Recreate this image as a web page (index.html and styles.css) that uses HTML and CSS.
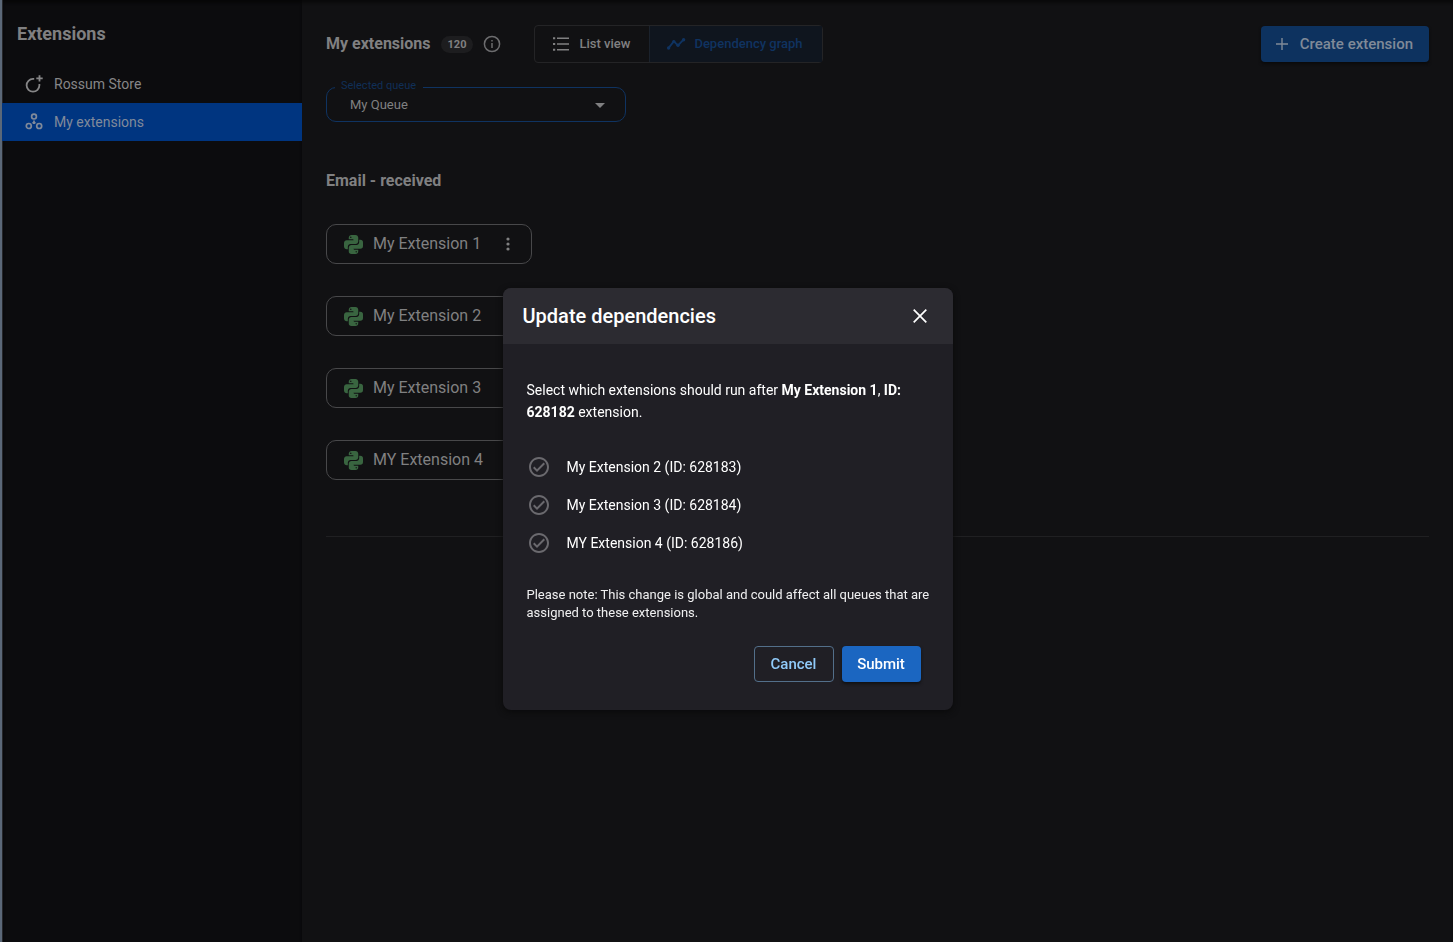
FILE: index.html
```html
<!DOCTYPE html>
<html lang="en">
<head>
<meta charset="utf-8">
<meta name="viewport" content="width=device-width, initial-scale=1">
<title>My extensions</title>
<link rel="stylesheet" href="styles.css">
</head>
<body>
<svg class="defs" aria-hidden="true">
  <symbol id="python" viewBox="2 2.5 20 20"><path d="M19.14,7.5A2.86,2.86 0 0,1 22,10.36V14.14A2.86,2.86 0 0,1 19.14,17H12C12,17.39 12.32,17.96 12.71,17.96H17V19.64A2.86,2.86 0 0,1 14.14,22.5H9.86A2.86,2.86 0 0,1 7,19.64V15.89C7,14.31 8.28,13.04 9.86,13.04H15.11C16.69,13.04 17.96,11.76 17.96,10.18V7.5H19.14M14.86,19.29C14.46,19.29 14.14,19.59 14.14,20.18C14.14,20.77 14.46,20.89 14.86,20.89A0.71,0.71 0 0,0 15.57,20.18C15.57,19.59 15.25,19.29 14.86,19.29M4.86,17.5C3.28,17.5 2,16.22 2,14.64V10.86C2,9.28 3.28,8 4.86,8H12C12,7.61 11.68,7.04 11.29,7.04H7V5.36C7,3.78 8.28,2.5 9.86,2.5H14.14C15.72,2.5 17,3.78 17,5.36V9.11C17,10.69 15.72,11.96 14.14,11.96H8.89C7.31,11.96 6.04,13.24 6.04,14.82V17.5H4.86M9.14,5.71C9.54,5.71 9.86,5.41 9.86,4.82C9.86,4.23 9.54,4.11 9.14,4.11C8.75,4.11 8.43,4.23 8.43,4.82C8.43,5.41 8.75,5.71 9.14,5.71Z"/></symbol>
  <symbol id="dots" viewBox="0 0 20 20"><circle cx="10" cy="5" r="1.6"/><circle cx="10" cy="10" r="1.6"/><circle cx="10" cy="15" r="1.6"/></symbol>
  <symbol id="check" viewBox="0 0 24 24"><path d="M12 2C6.48 2 2 6.48 2 12s4.48 10 10 10 10-4.48 10-10S17.52 2 12 2zm0 18c-4.41 0-8-3.59-8-8s3.59-8 8-8 8 3.59 8 8-3.59 8-8 8zm4.59-12.42L10 14.17l-2.59-2.58L6 13l4 4 8-8z"/></symbol>
</svg>
<div class="app">
  <aside class="sidebar">
    <h2 class="sidebar-title">Extensions</h2>
    <nav class="nav">
      <a class="nav-item" href="#store">
        <svg class="icon-nav" viewBox="0 0 20 20" fill="none" stroke="currentColor" stroke-width="1.8"><path d="M10.2 4.9H9A6.4 6.4 0 1 0 15.4 11.3V10"/><path d="M15.5 1.2v6.4M12.3 4.4h6.4"/></svg>
        Rossum Store
      </a>
      <a class="nav-item active" href="#mine" aria-current="page">
        <svg class="icon-nav" viewBox="0 0 20 20" fill="none" stroke="currentColor" stroke-width="1.7"><circle cx="10" cy="4.6" r="2.4"/><circle cx="4.8" cy="14" r="2.5"/><circle cx="15.2" cy="14" r="2.5"/><path d="M10 8.6v2M10 10l-1.4 1.4M10 10l1.4 1.4"/></svg>
        My extensions
      </a>
    </nav>
  </aside>
  <main class="main">
    <header class="toolbar">
      <h1 class="heading">My extensions</h1>
      <span class="count">120</span>
      <svg class="icon-info" viewBox="0 0 18 18" fill="none" stroke="currentColor" stroke-width="1.5"><circle cx="9" cy="9" r="7.6"/><path d="M9 8v5M9 5v1.6"/></svg>
      <div class="toggle">
        <button class="toggle-btn" type="button">
          <svg class="icon-toggle" viewBox="0 0 20 20" fill="currentColor"><path d="M2 3.2h2.2v2H2zM2 9h2.2v2H2zM2 14.8h2.2v2H2zM6 3.4h12v1.6H6zM6 9.2h12v1.6H6zM6 15h12v1.6H6z"/></svg>
          List view
        </button>
        <button class="toggle-btn selected" type="button" aria-pressed="true">
          <svg class="icon-toggle" viewBox="0 0 20 20" fill="currentColor"><path d="M2.3 14.4 7.8 7.4l4.2 4 5.8-6" fill="none" stroke="currentColor" stroke-width="1.8"/><circle cx="2.6" cy="14" r="1.7"/><circle cx="7.8" cy="7.6" r="1.7"/><circle cx="12" cy="11.2" r="1.7"/><circle cx="17.6" cy="5.8" r="1.7"/></svg>
          Dependency graph
        </button>
      </div>
      <button class="create" type="button">
        <svg class="icon-plus" viewBox="0 0 12 12" fill="none" stroke="currentColor" stroke-width="1.4"><path d="M6 0v12M0 6h12"/></svg>
        Create extension
      </button>
    </header>
    <div class="queue">
      <label class="queue-label" for="queue">Selected queue</label>
      <select class="queue-select" id="queue"><option>My Queue</option></select>
      <svg class="queue-arrow" viewBox="0 0 10 5" fill="currentColor"><path d="M0 0h10L5 5z"/></svg>
    </div>
    <section class="group">
      <h2 class="group-title">Email - received</h2>
      <div class="cards">
        <div class="card"><svg class="icon-python"><use href="#python"/></svg><span class="card-name">My Extension 1</span><button class="more" type="button" aria-label="More"><svg class="icon-more"><use href="#dots"/></svg></button></div>
        <div class="card"><svg class="icon-python"><use href="#python"/></svg><span class="card-name">My Extension 2</span><button class="more" type="button" aria-label="More"><svg class="icon-more"><use href="#dots"/></svg></button></div>
        <div class="card"><svg class="icon-python"><use href="#python"/></svg><span class="card-name">My Extension 3</span><button class="more" type="button" aria-label="More"><svg class="icon-more"><use href="#dots"/></svg></button></div>
        <div class="card"><svg class="icon-python"><use href="#python"/></svg><span class="card-name">MY Extension 4</span><button class="more" type="button" aria-label="More"><svg class="icon-more"><use href="#dots"/></svg></button></div>
      </div>
    </section>
  </main>
</div>
<div class="overlay">
  <div class="dialog" role="dialog" aria-modal="true" aria-labelledby="dialog-title">
    <header class="dialog-head">
      <h2 class="dialog-title" id="dialog-title">Update dependencies</h2>
      <button class="close" type="button" aria-label="Close"><svg class="icon-close" viewBox="0 0 14 14" fill="none" stroke="currentColor" stroke-width="1.7"><path d="M.7.7l12.6 12.6M13.3.7L.7 13.3"/></svg></button>
    </header>
    <div class="dialog-body">
      <p class="intro">Select which extensions should run after <strong>My Extension 1</strong>, <strong>ID: 628182</strong> extension.</p>
      <div class="options">
        <label class="option"><input class="option-input" type="checkbox"><svg class="icon-check"><use href="#check"/></svg>My Extension 2 (ID: 628183)</label>
        <label class="option"><input class="option-input" type="checkbox"><svg class="icon-check"><use href="#check"/></svg>My Extension 3 (ID: 628184)</label>
        <label class="option"><input class="option-input" type="checkbox"><svg class="icon-check"><use href="#check"/></svg>MY Extension 4 (ID: 628186)</label>
      </div>
      <p class="note">Please note: This change is global and could affect all queues that are assigned to these extensions.</p>
      <div class="actions">
        <button class="btn cancel" type="button">Cancel</button>
        <button class="btn submit" type="button">Submit</button>
      </div>
    </div>
  </div>
</div>
</body>
</html>
```

FILE: styles.css
```css
* { box-sizing: border-box; }
body {
  margin: 0;
  font-family: Roboto, "Liberation Sans", sans-serif;
  font-size: 14px;
  line-height: 20px;
  color: #808081;
  background: #111113;
}
h1, h2, p { margin: 0; }
button, select { font: inherit; color: inherit; }
button { padding: 0; border: 0; background: none; cursor: pointer; white-space: nowrap; }
svg { flex: none; }
.defs { display: none; }

.app {
  display: flex;
  min-height: 100vh;
  border-left: 2px solid #5b6878;
  box-shadow: inset 0 3px 3px #0a0a0b;
}
.sidebar {
  flex: none;
  width: 300px;
  background: #0c0c0e;
  border-left: 1px solid #252629;
  box-shadow: inset 0 3px 3px #070708;
}
.sidebar-title {
  padding: 24px 14px 21px;
  font-size: 18px;
  line-height: 20px;
  font-weight: 700;
}
.nav-item {
  display: flex;
  align-items: center;
  gap: 10px;
  height: 38px;
  margin-left: -1px;
  padding-left: 22px;
  color: #868687;
  text-decoration: none;
}
.nav-item.active { background: #003580; color: #808a9a; }
.icon-nav { width: 20px; height: 20px; }

.main { flex: 1; min-width: 0; padding: 24px 24px 0; }
.toolbar { display: flex; align-items: center; height: 40px; }
.heading { font-size: 16px; font-weight: 700; white-space: nowrap; }
.count {
  margin-left: 10px;
  padding: 0 7px;
  font-size: 11px;
  line-height: 17px;
  font-weight: 700;
  border-radius: 9px;
  background: #1d1d1f;
}
.icon-info { width: 18px; height: 18px; margin-left: 10px; color: #6c6c6e; }
.toggle {
  display: flex;
  height: 38px;
  margin-left: 33px;
  border: 1px solid #242426;
  border-radius: 4px;
  font-size: 13px;
  font-weight: 500;
}
.toggle-btn { display: flex; align-items: center; gap: 8px; padding: 0 19px 0 16px; }
.toggle-btn.selected {
  color: #0f3361;
  background: #0f151e;
  border-left: 1px solid #1b222c;
}
.icon-toggle { width: 20px; height: 20px; }
.create {
  display: flex;
  align-items: center;
  gap: 12px;
  height: 36px;
  margin-left: auto;
  padding: 0 16px 0 15px;
  font-size: 15px;
  font-weight: 500;
  color: #808a98;
  background: #0d325f;
  border-radius: 4px;
  box-shadow: 0 2px 3px #0a0a0b;
}
.icon-plus { width: 12px; height: 12px; }

.queue { position: relative; width: 300px; margin-top: 23px; }
.queue-label {
  position: absolute;
  top: -9px;
  left: 9px;
  padding: 0 7px 0 6px;
  font-size: 11px;
  line-height: 16px;
  color: #102f57;
  background: #111113;
}
.queue-select {
  display: block;
  width: 100%;
  height: 35px;
  padding: 0 23px;
  font-size: 13px;
  appearance: none;
  background: none;
  border: 1px solid #0f3361;
  border-radius: 10px;
}
.queue-arrow {
  position: absolute;
  top: 16px;
  right: 21px;
  width: 10px;
  height: 5px;
  pointer-events: none;
}

.group { margin-top: 48px; padding-bottom: 56px; border-bottom: 1px solid #202022; }
.group-title { font-size: 16px; line-height: 22px; font-weight: 700; }
.cards { display: flex; flex-direction: column; align-items: flex-start; gap: 32px; margin-top: 32px; }
.card {
  display: flex;
  align-items: center;
  min-width: 206px;
  height: 40px;
  padding: 0 12px 0 17px;
  font-size: 16px;
  border: 1px solid #48484a;
  border-radius: 10px;
}
.icon-python { width: 19px; height: 19px; margin-right: 10px; fill: #396540; }
.more { display: flex; margin-left: auto; }
.icon-more { width: 22px; height: 20px; fill: #808081; }

.overlay {
  position: fixed;
  inset: 0;
  display: flex;
  align-items: center;
  justify-content: center;
  padding: 56px 0 0 2px;
}
.dialog {
  width: 450px;
  color: #fff;
  background: #201f25;
  border-radius: 8px;
  box-shadow: 0 2px 6px #0a0a0b;
}
.dialog-head {
  display: flex;
  align-items: center;
  justify-content: space-between;
  height: 56px;
  padding: 0 26px 0 20px;
  background: #2c2b31;
  border-radius: 8px 8px 0 0;
}
.dialog-title { font-size: 20px; line-height: 24px; font-weight: 500; }
.close { display: flex; }
.icon-close { width: 14px; height: 14px; }
.dialog-body { padding: 35px 20px 28px 24px; }
.intro { line-height: 22px; }
.options { margin-top: 25px; }
.option {
  position: relative;
  display: flex;
  align-items: center;
  gap: 16px;
  height: 38px;
}
.option-input { position: absolute; left: 0; width: 24px; height: 24px; margin: 0; opacity: 0; }
.icon-check { width: 24px; height: 24px; fill: #6a696e; }
.note { margin-top: 24px; font-size: 13px; line-height: 18px; color: #f0f0f1; }
.actions { display: flex; justify-content: flex-end; gap: 8px; margin-top: 24px; padding-right: 12px; }
.btn { min-width: 79px; height: 36px; padding: 0 15px; border-radius: 4px; font-size: 15px; font-weight: 500; }
.cancel { min-width: 80px; color: #90caf9; border: 1px solid #536f8a; }
.submit { background: #1b66c1; box-shadow: 0 2px 3px #111113; }
```
